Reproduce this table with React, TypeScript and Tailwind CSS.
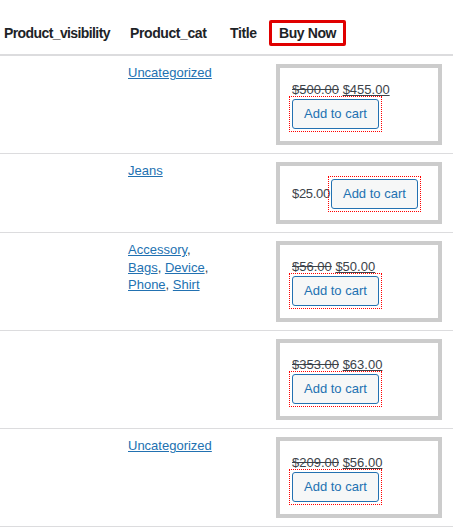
import React from "react";

type Row = {
  cats: string[];
  was?: string;
  now: string;
  inline?: boolean;
};

const ROWS: Row[] = [
  { cats: ["Uncategorized"], was: "$500.00", now: "$455.00" },
  { cats: ["Jeans"], now: "$25.00", inline: true },
  { cats: ["Accessory", "Bags", "Device", "Phone", "Shirt"], was: "$56.00", now: "$50.00" },
  { cats: [], was: "$353.00", now: "$63.00" },
  { cats: ["Uncategorized"], was: "$209.00", now: "$56.00" },
];

const font = { fontFamily: '"Liberation Sans", Arial, sans-serif' };

// dotted red focus ring drawn as a wrapper border, pulled back so the button keeps its place
function CartButton() {
  return (
    <span className="-mx-[3px] -my-[3px] inline-block border border-dotted border-[#ff0000] p-[2px]">
      <button
        type="button"
        className="block h-[30px] rounded-[3px] border border-[#2271b1] bg-[#f6f7f7] px-[11px] text-[13px] leading-[28px] text-[#2271b1]"
      >
        Add to cart
      </button>
    </span>
  );
}

function BuyBox({ row }: { row: Row }) {
  if (row.inline) {
    return (
      <div className="flex h-[62px] w-[166px] items-center border-4 border-[#cccccc] pl-[12px] pt-[2px]">
        <span className="mr-[1px] text-[13px] tracking-[-0.3px] text-[#3c434a]">{row.now}</span>
        <CartButton />
      </div>
    );
  }
  return (
    <div className="h-[81px] w-[166px] border-4 border-[#cccccc] pl-[12px] pt-[13px]">
      <div className="h-[18px] text-[13px] leading-[18px] text-[#3c434a]">
        <del>{row.was}</del> <ins className="underline">{row.now}</ins>
      </div>
      <CartButton />
    </div>
  );
}

export default function App() {
  return (
    <div className="h-[527px] w-[453px] overflow-hidden bg-white" style={font}>
      <div className="grid h-[56px] grid-cols-[120px_102px_46px_1fr] border-b-2 border-[#dcdcde] text-[14px] font-bold text-[#1d2327]">
        <div className="pl-[4px] pt-[23px] leading-[20px] tracking-[-0.6px]">Product_visibility</div>
        <div className="pl-[10px] pt-[23px] leading-[20px] tracking-[-0.4px]">Product_cat</div>
        <div className="pl-[8px] pt-[23px] leading-[20px] tracking-[-0.4px]">Title</div>
        <div className="pl-[1px] pt-[20px]">
          <div className="inline-block rounded-[2px] border-[3px] border-[#e00000] px-[7px] leading-[20px] tracking-[-0.4px]">
            Buy Now
          </div>
        </div>
      </div>

      {ROWS.map((row, i) => (
        <div
          key={i}
          className="grid grid-cols-[120px_102px_46px_1fr] border-b border-[#dcdcde] pb-[8px] pt-[8px]"
        >
          <div />
          <div className="pl-[8px] text-[13px] leading-[17.5px] text-[#3c434a]">
            {row.cats.map((c, j) => (
              <React.Fragment key={c}>
                <a href="#" className="text-[#2271b1] underline">
                  {c}
                </a>
                {j < row.cats.length - 1 ? ", " : ""}
              </React.Fragment>
            ))}
          </div>
          <div />
          <div className="pl-[8px]">
            <BuyBox row={row} />
          </div>
        </div>
      ))}
    </div>
  );
}
